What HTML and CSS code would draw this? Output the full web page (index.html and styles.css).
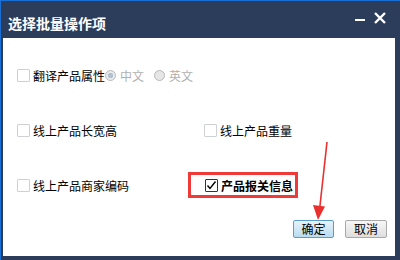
FILE: index.html
```html
<!DOCTYPE html>
<html lang="zh-CN">
<head>
    <meta charset="UTF-8">
    <title>选择批量操作项</title>
    <link rel="stylesheet" href="styles.css">
</head>
<body>
    <div class="window">
        <div class="titlebar">
            <span class="title">选择批量操作项</span>
            <div class="win-buttons">
                <span class="btn-min"></span>
                <svg class="btn-close" width="12" height="12" viewBox="0 0 12 12">
                    <path d="M1 1 L11 11 M11 1 L1 11" stroke="#fff" stroke-width="2.4" />
                </svg>
            </div>
        </div>
        <div class="content">
            <div class="options">
                <div class="option wide">
                    <span class="check"></span>
                    <span class="label">翻译产品属性</span>
                    <span class="radio selected"></span>
                    <span class="radio-label">中文</span>
                    <span class="radio"></span>
                    <span class="radio-label">英文</span>
                </div>
                <div class="option">
                    <span class="check"></span>
                    <span class="label">线上产品长宽高</span>
                </div>
                <div class="option col2">
                    <span class="check"></span>
                    <span class="label">线上产品重量</span>
                </div>
                <div class="option">
                    <span class="check"></span>
                    <span class="label">线上产品商家编码</span>
                </div>
                <div class="option col2 marked">
                    <span class="check checked">
                        <svg width="11" height="11" viewBox="0 0 11 11">
                            <path d="M1.5 5.5 L4 8.5 L9.5 1.5" stroke="#000" stroke-width="1.4" fill="none" />
                        </svg>
                    </span>
                    <span class="label bold">产品报关信息</span>
                </div>
            </div>
            <div class="actions">
                <button type="button" class="btn btn-ok">确定</button>
                <button type="button" class="btn btn-cancel">取消</button>
            </div>
        </div>
        <!-- annotation arrow over the dialog -->
        <svg class="arrow" width="400" height="260" viewBox="0 0 400 260">
            <path d="M327 142 L319.5 210" stroke="#e8302f" stroke-width="1.6" fill="none" />
            <path d="M313 205 L325 206.5 L318 220 Z" fill="#e8302f" />
        </svg>
    </div>
</body>
</html>
```

FILE: styles.css
```css
* {
    box-sizing: border-box;
}

body {
    margin: 0;
    font-family: "Noto Sans CJK SC", "Noto Sans", sans-serif;
    font-size: 12px;
    color: #000;
}

.window {
    position: relative;
    width: 400px;
    height: 260px;
    background: #2c3d5b;
    border-top: 1px solid #1a6fd6;
    border-left: 1px solid #1a6fd6;
    padding: 0 5px 4px 2px;
    display: flex;
    flex-direction: column;
}

.titlebar {
    height: 37px;
    display: flex;
    align-items: center;
    justify-content: space-between;
    padding: 0 9px 0 5px;
}

    .titlebar .title {
        color: #fff;
        font-size: 14px;
        font-weight: bold;
        letter-spacing: 0;
        margin-top: 6px;
    }

.win-buttons {
    display: flex;
    align-items: center;
    gap: 9px;
    margin-top: -3px;
}

.btn-min {
    display: block;
    width: 10px;
    height: 2px;
    background: #fff;
    margin-top: 4px;
}

.content {
    flex: 1;
    background: #fff;
    padding: 24px 8px 0 14px;
}

.options {
    display: grid;
    grid-template-columns: 171px 1fr;
    row-gap: 29px;
}

.option {
    height: 26px;
    display: flex;
    align-items: center;
}

    .option.wide {
        grid-column: 1 / 3;
    }

    .option.col2 {
        padding-left: 16px;
    }

    .option.marked {
        width: 110px;
        border: 3px solid #f03a3a;
        padding-left: 14px;
        height: 26px;
    }

.check {
    width: 13px;
    height: 13px;
    border: 1px solid #cdd1d6;
    border-radius: 1px;
    margin-right: 3px;
    display: flex;
    align-items: center;
    justify-content: center;
    flex-shrink: 0;
}

    .check.checked {
        border-color: #333;
    }

.label {
    white-space: nowrap;
}

    .label.bold {
        font-weight: bold;
    }

.radio {
    width: 11px;
    height: 11px;
    border: 1px solid #b8b8b8;
    border-radius: 50%;
    background: #e6e6e6;
    margin: 0 4px 0 0;
    flex-shrink: 0;
}

    .radio.selected {
        background: radial-gradient(circle, #b4c2cf 0, #b4c2cf 2.5px, #e8ecef 3px);
    }

    .radio + .radio-label + .radio {
        margin-left: 10px;
    }

.radio-label {
    color: #b0b0b0;
}

.actions {
    display: flex;
    justify-content: flex-end;
    gap: 11px;
    margin-top: 22px;
}

.btn {
    height: 18px;
    padding: 0;
    font-family: inherit;
    font-size: 12px;
    line-height: 16px;
    color: #000;
    border-radius: 2px;
    cursor: pointer;
}

.btn-ok {
    width: 41px;
    border: 1px solid #5c9ccc;
    background: linear-gradient(#e6f3fb, #b9dcf1);
}

.btn-cancel {
    width: 42px;
    border: 1px solid #a9a9a9;
    background: linear-gradient(#f7f7f7, #dedede);
}

.arrow {
    position: absolute;
    left: -1px;
    top: -1px;
    pointer-events: none;
}
```
